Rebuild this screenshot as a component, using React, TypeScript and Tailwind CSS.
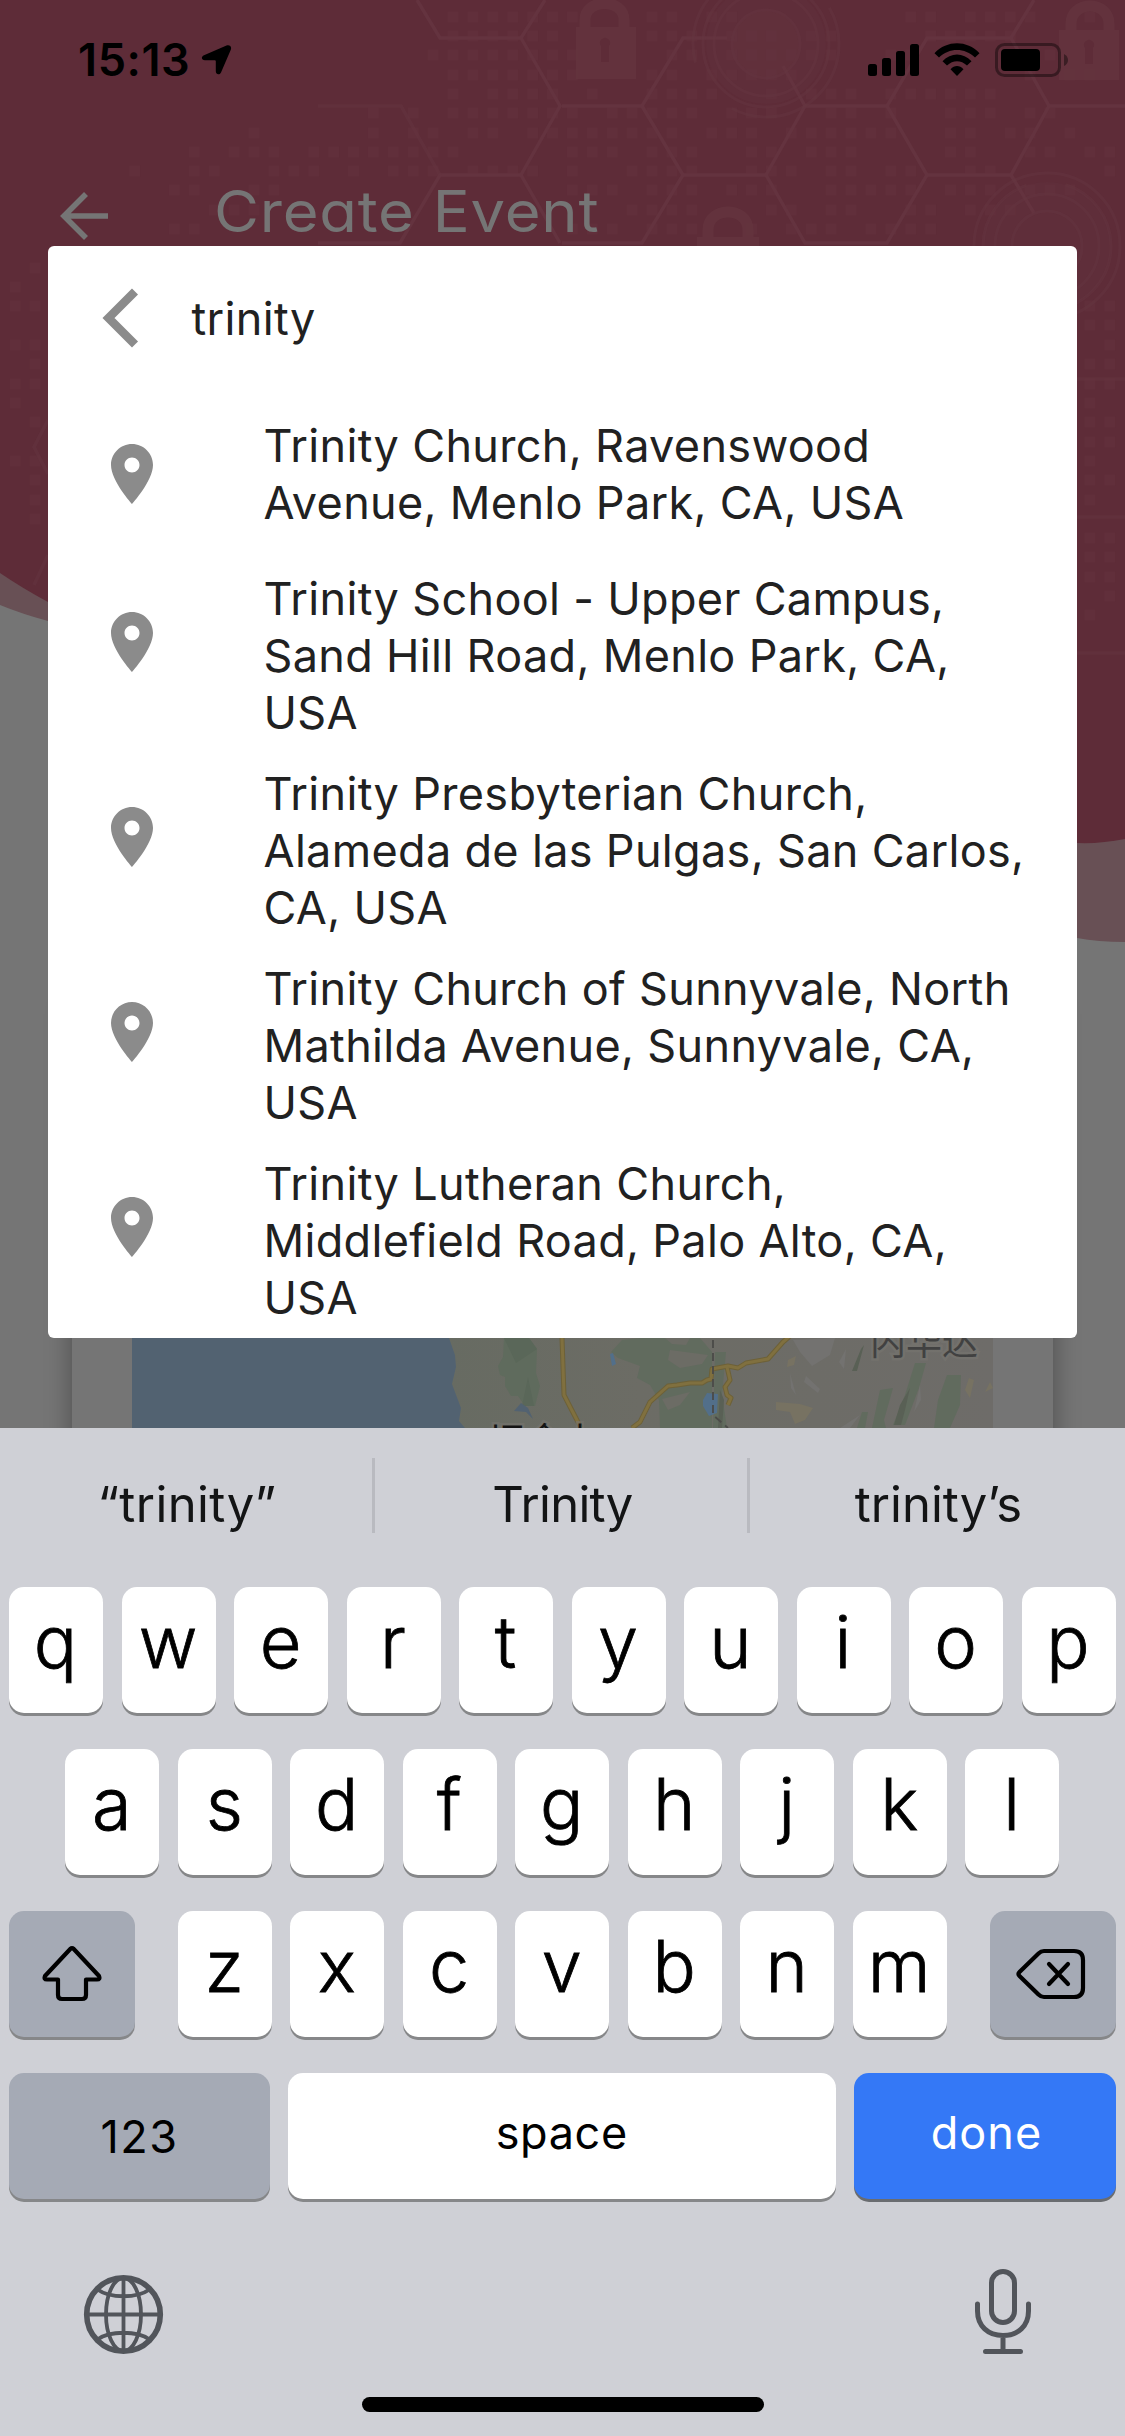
import type { ReactNode } from 'react';

const PLACES: string[][] = [
  ['Trinity Church, Ravenswood', 'Avenue, Menlo Park, CA, USA'],
  ['Trinity School - Upper Campus,', 'Sand Hill Road, Menlo Park, CA,', 'USA'],
  ['Trinity Presbyterian Church,', 'Alameda de las Pulgas, San Carlos,', 'CA, USA'],
  ['Trinity Church of Sunnyvale, North', 'Mathilda Avenue, Sunnyvale, CA,', 'USA'],
  ['Trinity Lutheran Church,', 'Middlefield Road, Palo Alto, CA,', 'USA'],
];

// Each row: y of the dots, then [first, last] column ranges on a 19.9px grid.
const DOT_ROWS: [number, number[][]][] = [
  [17, [[0, 6], [10, 11], [13, 14], [23, 24], [26, 29], [32, 32]]],
  [36, [[0, 5], [10, 12], [14, 16], [18, 19], [24, 28]]],
  [55, [[-1, 6], [11, 12], [14, 19], [22, 23], [28, 30]]],
  [75, [[0, 6], [10, 11], [13, 17], [29, 29], [31, 32]]],
  [94, [[0, 0], [2, 5], [7, 7], [10, 13], [16, 16], [18, 20], [22, 27]]],
  [113, [[-4, -4], [-2, -2], [0, 6], [8, 12], [14, 16], [19, 20], [22, 22], [25, 27], [29, 30]]],
  [133, [[-10, -10], [-4, -4], [-2, -1], [1, 2], [4, 11], [13, 15], [17, 22], [25, 26], [28, 29], [31, 31]]],
  [152, [[-13, -13], [-11, -9], [-7, 0], [6, 8], [10, 12], [15, 16], [18, 20], [25, 26], [29, 30], [32, 33]]],
  [171, [[-16, -16], [-13, -12], [-9, -7], [-5, -5], [-3, -1], [1, 4], [6, 6], [9, 12], [15, 17], [19, 20], [22, 23], [26, 27], [33, 33]]],
  [190, [[-14, -13], [-10, -9], [6, 8], [10, 12], [14, 16], [19, 23], [25, 27], [29, 31]]],
  [210, [[-12, -10], [9, 12], [16, 17], [19, 20], [23, 24], [26, 28]]],
  [229, [[-14, -13], [6, 8], [10, 12], [15, 15], [17, 19], [21, 24]]],
  [268, [[-21, -21]]],
  [287, [[-22, -22]]],
  [306, [[-22, -21], [32, 33]]],
  [325, [[32, 33]]],
  [345, [[-22, -21], [33, 33]]],
  [364, [[-21, -21], [32, 33]]],
  [384, [[-22, -21], [32, 33]]],
  [403, [[-22, -22], [32, 32]]],
  [422, [[-21, -21], [32, 33]]],
  [442, [[32, 33]]],
  [461, [[-22, -21], [32, 32]]],
  [480, [[-21, -21], [32, 33]]],
  [500, [[-21, -21], [32, 32]]],
  [519, [[-21, -21]]],
  [538, [[32, 33]]],
  [557, [[32, 33]]],
  [577, [[32, 33]]],
  [596, [[33, 33]]],
  [615, [[32, 32]]],
];

function dotPath() {
  let d = '';
  for (const [y, ranges] of DOT_ROWS)
    for (const [a, b] of ranges)
      for (let k = a; k <= b; k++) d += `M${(453 + k * 19.9 - 5.5).toFixed(1)} ${y - 5.5}h11v11h-11z`;
  return d;
}

function HeaderArt() {
  const dots = dotPath();
  return (
    <svg className="absolute inset-0" width="1125" height="1428" viewBox="0 0 1125 1428" fill="none">
      <path d="M0 0H1125V942Q1098 942 1077 938C700 850 420 690 48 621Q22 614 0 605Z" fill="#685055" />
      <path d="M0 0H1125V839Q1100 844 1077 843C700 810 380 760 48 602Q22 588 0 573Z" fill="#5e2c38" />
      <path d={dots} fill="#612f3b" />
      <g stroke="#64333f" strokeWidth="3.5">
        <path d="M417 0L440 38H521L545 0M521 38L560 106L521 175L560 243M521 175H440L400 243H318M562 106H642L683 38H727M642 106L683 175L642 243H562M683 175H766L805 243H887L927 175L887 106L927 38H1011L1034 0M887 106H805L766 175M805 106L783 66M927 175H1011L1049 106L1011 38M1049 106H1125M1011 175L1034 213" />
        <path d="M318 106H401L440 175" strokeOpacity=".6" />
        <path d="M1077 379H1125M1077 517H1125M1077 653H1125M48 420L34 447L48 474M48 555L34 585" strokeOpacity=".6" />
      </g>
      <g fill="#64343f" fillOpacity=".8">
        <path fillRule="evenodd" d="M576 27h60v52h-60zM601 46v16h8V46a5 5 0 1 0-8 0z" />
        <path fillRule="evenodd" d="M1059 30h60v50h-60zM1085 48v16h8V48a5 5 0 1 0-8 0z" />
        <path d="M697 237h62v10h-62z" />
      </g>
      <g stroke="#64343f" strokeOpacity=".8" strokeWidth="11">
        <path d="M585 27V20C585 -2 624 -2 624 20V27" />
        <path d="M1071 30V24C1071 0 1109 0 1109 24V30" />
        <path d="M708 237V230C708 206 748 206 748 230V237" />
      </g>
      <circle cx="766" cy="44" r="33" fill="#64343f" fillOpacity=".4" />
      <circle cx="766" cy="44" r="60" fill="#64343f" fillOpacity=".25" />
      <g stroke="#64343f" strokeOpacity=".55" strokeWidth="3">
        <circle cx="766" cy="44" r="34" />
        <circle cx="766" cy="44" r="52" />
        <circle cx="766" cy="44" r="63" />
        <circle cx="766" cy="44" r="73" strokeDasharray="150 60" />
        <circle cx="1047" cy="246" r="35" />
        <circle cx="1047" cy="246" r="52" />
        <circle cx="1047" cy="246" r="64" strokeDasharray="120 40" />
        <circle cx="1047" cy="246" r="73" />
      </g>
      <circle cx="1047" cy="246" r="64" fill="#64343f" fillOpacity=".25" />
    </svg>
  );
}

function StatusBar() {
  return (
    <div className="relative flex h-[132px] items-start justify-between pl-[78px] pr-[57px] pt-[33px]">
      <div className="flex items-start">
        <span className="text-[45px] font-semibold leading-[54px] tracking-[0.6px] text-black">15:13</span>
        <svg className="ml-[11px] mt-[11px]" width="32" height="32" viewBox="201 44 32 32">
          <path d="M204 55.200L226.500 45.500C229.500 44.300 232 46.500 230.800 49.700L221 72.500C219.600 75.500 215.800 74.700 215.800 71.300V61.200Q215.800 60.200 214.800 60.200H205C201.300 60.200 200.800 56.600 204 55.200Z" />
        </svg>
      </div>
      <svg className="mt-[8px]" width="202" height="38" viewBox="866 41 202 38">
        <rect x="868" y="64" width="9" height="12" rx="2.500" />
        <rect x="882" y="58" width="9" height="18" rx="2.500" />
        <rect x="896" y="51" width="9" height="25" rx="2.500" />
        <rect x="910" y="44" width="9" height="32" rx="2.500" />
        <path d="M934.500 53.200C947 40 967 40 979.500 53.200L975 57.500C965 47.500 949 47.500 939 57.500Z" />
        <path d="M942.500 61.300C951 52.300 963 52.300 971.500 61.300L967 65.600C961 59.800 953 59.800 947 65.600Z" />
        <path d="M950.500 69.300C954.500 65 959.500 65 963.500 69.300L957 76Z" />
        <rect x="996.500" y="44.500" width="63" height="31" rx="8" fill="none" stroke="#000" strokeOpacity=".4" strokeWidth="3" />
        <rect x="1001" y="49" width="39" height="22" rx="4" />
        <path d="M1064 54Q1068 56 1068 60T1064 66Z" fillOpacity=".4" />
      </svg>
    </div>
  );
}

function TitleBar() {
  return (
    <div className="relative flex h-[114px] items-start pl-[59px] text-[#757575]">
      <svg className="mt-[59px]" width="50" height="50" viewBox="59 191 50 50" fill="none" stroke="#757575" strokeWidth="5.600">
        <path d="M108 216H64M86 194L64 216L86 238" />
      </svg>
      <h1 className="ml-[105px] mt-[45px] origin-left scale-x-[1.08] text-[57px] leading-[69px] tracking-[0.7px] [font-feature-settings:'cv11']">Create Event</h1>
    </div>
  );
}

function MapCard() {
  return (
    <div className="relative mx-[72px] mt-[760px] h-[600px] bg-[#757575] px-[60px] pt-[332px] shadow-[0_0_24px_rgba(0,0,0,0.35)]">
      <svg width="861" height="90" viewBox="132 1338 861 90">
        <defs>
          <linearGradient id="land" x1="0" x2="1" y1="0" y2="0">
            <stop offset="0" stopColor="#676b62" />
            <stop offset=".35" stopColor="#6c6c65" />
            <stop offset="1" stopColor="#6e6c69" />
          </linearGradient>
        </defs>
        <rect x="132" y="1338" width="861" height="90" fill="#526271" />
        <path d="M449 1338L455 1355L456 1367L452 1384L461 1408L459 1421L465 1428H993V1338Z" fill="url(#land)" />
        <path d="M504 1338H529L537 1349L536 1373L540 1386L535 1406H525L518 1396H511L505 1386V1377L500 1375L498 1366L503 1357Z" fill="#5f6b5d" />
        <path d="M504 1338H529L537 1349L516 1363ZM528 1377L534 1406H522Z" fill="#5a6759" />
        <path d="M521 1403L528 1408L533 1419L526 1412L514 1411Z" fill="#526271" />
        <path d="M611 1352L622 1340L640 1338H700L712 1352V1428H660L659 1400L650 1385L637 1378L640 1366L618 1358Z" fill="#616b5e" />
        <path d="M670 1350L708 1355L702 1364L680 1368L668 1360ZM665 1338H690L686 1345L672 1344ZM662 1399L690 1392L680 1405L668 1410Z" fill="#6c6c65" />
        <path d="M715 1352H726L722 1395L727 1428H713Z" fill="#616b5e" />
        <path d="M915 1363H926L919 1388L905 1425H893L905 1395ZM947 1375H961L960 1405L950 1428H934L938 1400ZM880 1390L893 1388L884 1420L886 1428H872ZM862 1412H868L865 1428H857Z" fill="#616b5e" />
        <path d="M910 1388L905 1410L901 1425H894L900 1405ZM861 1349L864 1345L857 1371H852ZM720 1390L724 1400L722 1428H718Z" fill="#596055" />
        <path d="M793 1340L835 1338L830 1355L812 1366L800 1352ZM806 1376L820 1389L818 1393L804 1382ZM790 1373L796 1395L791 1388ZM846 1349L844 1369L839 1362ZM920 1385L921 1400L914 1412ZM860 1415L850 1428H840Z" fill="#737270" />
        <path d="M788 1360L796 1356L794 1365L787 1367ZM776 1402L800 1404L813 1408L805 1420L795 1424L790 1412L776 1410ZM969 1378L974 1380L970 1398L965 1390ZM990 1382L985 1392L993 1388Z" fill="#777262" />
        <path d="M610 1354L613 1353L616 1364L612 1366Z" fill="#526f8a" />
        <path d="M707 1393L718 1394L717 1413L709 1416L703 1406V1400Z" fill="#526f8a" />
        <g fill="none" strokeLinejoin="round">
          <path d="M562 1338L564 1395L581 1428M632 1428L640 1422L650 1402L668 1386L677 1385L690 1383H702L707 1380L711 1379L712 1369L728 1366L738 1368L746 1363L768 1359L783 1342L790 1336M727 1367L730 1380L725 1387L727 1395L731 1398L728 1405" stroke="#6d6138" strokeWidth="5" />
          <path d="M562 1338L564 1395L581 1428M632 1428L640 1422L650 1402L668 1386L677 1385L690 1383H702L707 1380L711 1379L712 1369L728 1366L738 1368L746 1363L768 1359L783 1342L790 1336M727 1367L730 1380L725 1387L727 1395L731 1398L728 1405" stroke="#80703f" strokeWidth="3" />
          <path d="M713 1340V1415L728 1428" stroke="#4b4b48" strokeWidth="1.800" strokeDasharray="8 5" />
        </g>
        <g className="font-['Noto_Sans_CJK_SC']" fontSize="36" textAnchor="middle" stroke="#777570" strokeWidth="5" strokeOpacity=".6" paintOrder="stroke">
          <text x="924" y="1355" fill="#414141">内华达</text>
          <text x="544" y="1454" fill="#141414">旧金山</text>
        </g>
      </svg>
    </div>
  );
}

function PlaceRow({ lines }: { lines: string[] }) {
  return (
    <li className="flex">
      <div className="flex h-[168px] w-[215.5px] shrink-0 items-center pl-[63px]">
        <svg width="42" height="60" viewBox="5 2 14 20" fill="#8b8b8b">
          <path d="M12 2C8.130 2 5 5.130 5 9c0 5.250 7 13 7 13s7-7.750 7-13c0-3.870-3.130-7-7-7zm0 9.500c-1.380 0-2.500-1.120-2.500-2.500s1.120-2.500 2.500-2.500 2.500 1.120 2.500 2.500-1.120 2.500-2.500 2.500z" />
        </svg>
      </div>
      <div className={lines.length === 2 ? 'py-[27px]' : 'py-3'}>
        {lines.map((l) => (
          <div key={l} className="whitespace-nowrap text-[45px] leading-[57px] tracking-[0.33px] text-[#212121]">{l}</div>
        ))}
      </div>
    </li>
  );
}

function SearchDialog() {
  return (
    <div className="absolute inset-0 px-12 pt-[246px]">
      <div className="h-[1092px] rounded-[6px] bg-white">
        <div className="flex h-[144px] items-start pl-[54px] pt-[42px]">
          <svg width="37" height="60" viewBox="0 0 37 60" fill="none" stroke="#8b8b8b" strokeWidth="8.500">
            <path d="M33 3.500L6.500 30L33 56.500" />
          </svg>
          <span className="ml-[52.5px] mt-[2px] text-[45px] leading-[57px] tracking-[0.36px] text-[#212121]">trinity</span>
        </div>
        <ul>
          {PLACES.map((p) => (
            <PlaceRow key={p[0]} lines={p} />
          ))}
        </ul>
      </div>
    </div>
  );
}

const KEY = 'flex h-[126px] items-center justify-center rounded-[15px] shadow-[0_3px_0_#868789]';

function LetterKey({ ch }: { ch: string }) {
  return (
    <div className={`${KEY} w-[94px] bg-white text-black`}>
      <span className="-mt-[16px] mr-px text-[72px] font-light leading-[88px] [-webkit-text-stroke:0.8px_#000]">{ch}</span>
    </div>
  );
}

function Letters({ text }: { text: string }) {
  return (
    <div className="flex justify-center gap-[18.5px]">
      {text.split('').map((c) => (
        <LetterKey key={c} ch={c} />
      ))}
    </div>
  );
}

function GreyKey({ children, wide }: { children: ReactNode; wide?: boolean }) {
  return <div className={`${KEY} bg-[#a5aab5] ${wide ? 'w-[261px]' : 'w-[126px]'}`}>{children}</div>;
}

function Keyboard() {
  return (
    <div className="flex h-[1008px] flex-col bg-[#cfd0d6]">
      <div className="flex h-[159px] items-start pt-[30px] text-[49px] leading-[60px] text-[#131415]">
        <div className="flex h-[75px] w-[372px] items-center justify-center pl-[2px] pt-[18px] tracking-[0.4px]">“trinity”</div>
        <div className="h-[75px] w-[3px] bg-[#b9bac0]" />
        <div className="flex h-[75px] w-[372px] items-center justify-center pl-[3px] pt-[18px] tracking-[-0.7px]">Trinity</div>
        <div className="h-[75px] w-[3px] bg-[#b9bac0]" />
        <div className="flex h-[75px] flex-1 items-center justify-center pl-[2px] pt-[18px]">trinity’s</div>
      </div>
      <div className="flex flex-col gap-9 pl-[9px] pr-[9.5px]">
        <Letters text="qwertyuiop" />
        <Letters text="asdfghjkl" />
        <div className="flex justify-between">
          <GreyKey>
            <svg width="60" height="58" viewBox="0 0 60 58" fill="none" stroke="#000" strokeWidth="4.200" strokeLinejoin="round">
              <path d="M28.500 3.800Q30 2.200 31.500 3.800L57 31Q58.500 34.500 55 34.500H44V50Q44 54 40 54H20Q16 54 16 50V34.500H5Q1.500 34.500 3 31Z" />
            </svg>
          </GreyKey>
          <Letters text="zxcvbnm" />
          <GreyKey>
            <svg className="-ml-[3px]" width="70" height="54" viewBox="0 0 70 54" fill="none" stroke="#000" strokeWidth="4.200" strokeLinecap="round" strokeLinejoin="round">
              <path d="M28 4H58Q67 4 67 13V41Q67 50 58 50H28Q25 50 22.500 47.500L3.500 29Q1.500 27 3.500 25L22.500 6.500Q25 4 28 4Z" />
              <path d="M33 17L52 37M52 17L33 37" />
            </svg>
          </GreyKey>
        </div>
        <div className="flex gap-[18px] text-[45px] leading-[54px]">
          <GreyKey wide>
            <span className="pt-[1px] tracking-[1.5px]">123</span>
          </GreyKey>
          <div className={`${KEY} flex-1 bg-white`}>
            <span className="-mt-[6px] tracking-[0.6px]">space</span>
          </div>
          <div className="flex h-[126px] w-[262px] items-center justify-center rounded-[15px] bg-[#3478f6] text-white shadow-[0_3px_0_#6a6c70]">
            <span className="-mt-[6px] pl-[4px] tracking-[1px]">done</span>
          </div>
        </div>
      </div>
      <div className="flex h-[198px] items-start justify-between pl-[83px] pr-[93px] pt-[69px]">
        <svg className="mt-[6px]" width="81" height="81" viewBox="0 0 81 81" fill="none" stroke="#52555b" strokeWidth="3.800">
          <circle cx="40.500" cy="40.500" r="36.800" strokeWidth="5.600" />
          <ellipse cx="40.500" cy="40.500" rx="17.500" ry="36.500" />
          <path d="M40.500 4V77M4 40.500H77M14.500 15.500C27 24.500 54 24.500 66.500 15.500M14.500 65.500C27 56.500 54 56.500 66.500 65.500" />
        </svg>
        <svg width="58" height="88" viewBox="0 0 58 88" fill="none" stroke="#52555b" strokeWidth="5" strokeLinecap="round">
          <rect x="17.500" y="3.500" width="23" height="51" rx="11.500" />
          <path d="M3.500 36V43C3.500 58 14 67.500 29 67.500S54.500 58 54.500 43V36M29 67.500V83M11.500 83.500H46.500" />
        </svg>
      </div>
      <div className="mx-auto h-[15px] w-[402px] rounded-full bg-black" />
    </div>
  );
}

export default function App() {
  return (
    <div className="flex h-[2436px] w-[1125px] flex-col overflow-hidden font-['Inter','Noto_Sans_CJK_SC',sans-serif]">
      <div className="relative h-[1428px] overflow-hidden bg-[#757575]">
        <HeaderArt />
        <StatusBar />
        <TitleBar />
        <MapCard />
        <SearchDialog />
      </div>
      <Keyboard />
    </div>
  );
}
